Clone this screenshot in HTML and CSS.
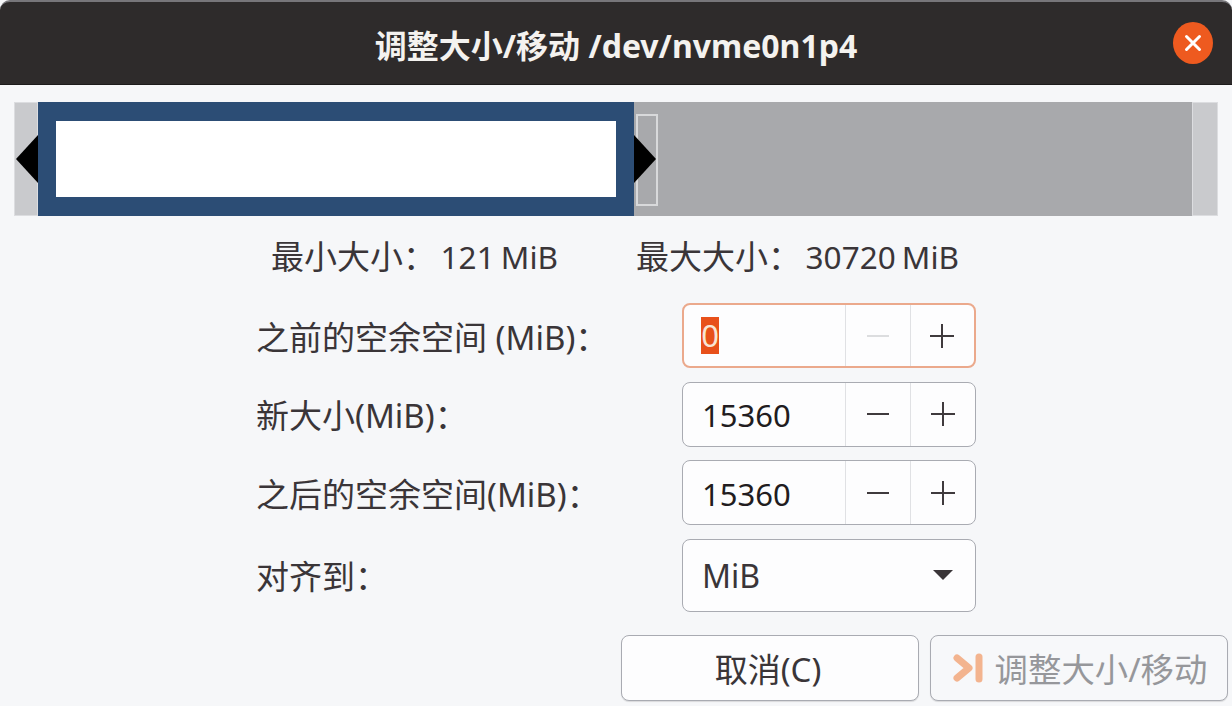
FILE: index.html
```html
<!doctype html>
<html lang="zh-CN">
  <head>
    <meta charset="UTF-8" />
    <title>调整大小/移动 /dev/nvme0n1p4</title>
    <link rel="stylesheet" href="styles.css">
  </head>
  <body>
    <div class="titlebar">
      <h1>调整大小/移动 /dev/nvme0n1p4</h1>
      <button class="close-btn" aria-label="关闭">
        <svg viewBox="0 0 40 42" width="40" height="42">
          <path d="M13.5 14.5 L26.5 27.5 M26.5 14.5 L13.5 27.5" stroke="#fff" stroke-width="3" stroke-linecap="round" fill="none" />
        </svg>
      </button>
    </div>

    <div class="content">
      <!-- Partition bar -->
      <div class="part-bar">
        <div class="bar-cap"></div>
        <div class="part-used">
          <div class="part-fill"></div>
          <div class="handle handle-left"></div>
          <div class="handle handle-right"></div>
        </div>
        <div class="part-free">
          <div class="free-marker"></div>
        </div>
        <div class="bar-cap bar-cap-end"></div>
      </div>

      <div class="size-info">
        <span class="size-min">最小大小：&nbsp;<span class="size-num">121 MiB</span></span>
        <span class="size-max">最大大小：&nbsp;<span class="size-num">30720 MiB</span></span>
      </div>

      <div class="form">
        <label>之前的空余空间 (MiB)：</label>
        <div class="spin spin-focus">
          <div class="spin-value"><span class="selected">0</span></div>
          <div class="spin-btn spin-disabled"><svg viewBox="0 0 24 24" width="24" height="24"><path d="M1 12 H23" /></svg></div>
          <div class="spin-btn"><svg viewBox="0 0 24 24" width="24" height="24"><path d="M0 12 H24 M12 0 V24" /></svg></div>
        </div>

        <label>新大小(MiB)：</label>
        <div class="spin">
          <div class="spin-value">15360</div>
          <div class="spin-btn"><svg viewBox="0 0 24 24" width="24" height="24"><path d="M1 12 H23" /></svg></div>
          <div class="spin-btn"><svg viewBox="0 0 24 24" width="24" height="24"><path d="M0 12 H24 M12 0 V24" /></svg></div>
        </div>

        <label>之后的空余空间(MiB)：</label>
        <div class="spin">
          <div class="spin-value">15360</div>
          <div class="spin-btn"><svg viewBox="0 0 24 24" width="24" height="24"><path d="M1 12 H23" /></svg></div>
          <div class="spin-btn"><svg viewBox="0 0 24 24" width="24" height="24"><path d="M0 12 H24 M12 0 V24" /></svg></div>
        </div>

        <label>对齐到：</label>
        <div class="combo">
          <span>MiB</span>
          <div class="combo-arrow"></div>
        </div>
      </div>

      <div class="actions">
        <button class="btn btn-cancel">取消(C)</button>
        <button class="btn btn-disabled">
          <svg viewBox="0 0 30 30" width="30" height="30">
            <path d="M4 5 L16 15 L4 25" stroke="#f3b48f" stroke-width="7" stroke-linecap="round" stroke-linejoin="round" fill="none" />
            <path d="M26 4 V26" stroke="#f3b48f" stroke-width="7" stroke-linecap="round" fill="none" />
          </svg>
          <span>调整大小/移动</span>
        </button>
      </div>
    </div>
  </body>
</html>
```

FILE: styles.css
```css
* {
  box-sizing: border-box;
}

html,
body {
  margin: 0;
  height: 100%;
}

body {
  width: 1232px;
  height: 706px;
  overflow: hidden;
  background-color: #f6f7f9;
  color: #3a3538;
  font-family: 'Noto Sans', 'Noto Sans CJK SC', sans-serif;
  font-size: 33px;
}

.titlebar {
  position: relative;
  display: flex;
  align-items: center;
  justify-content: center;
  height: 85px;
  padding-top: 3px;
  background-color: #2e2b2b;
  border-top: 2px solid #77767a;
  border-bottom: 1px solid #1d1b1b;
  border-radius: 10px 10px 0 0;
}

.titlebar h1 {
  margin: 0 0 2px;
  font-size: 32px;
  font-weight: 700;
  color: #f4f2ef;
}

.close-btn {
  position: absolute;
  top: 20px;
  left: 1173px;
  width: 40px;
  height: 42px;
  padding: 0;
  border: none;
  border-radius: 50%;
  background-color: #ee5a1f;
}

.close-btn svg {
  display: block;
}

.content {
  padding: 17px 4px 0 14px;
}

.part-bar {
  display: flex;
  width: 1204px;
  height: 114px;
}

.bar-cap {
  width: 24px;
  background-color: #c9cacd;
  border: 1px solid #dcdde0;
}

.bar-cap-end {
  width: 26px;
}

.part-used {
  position: relative;
  width: 596px;
  padding: 19px 18px;
  background-color: #2c4d75;
}

.part-fill {
  height: 76px;
  background-color: #fff;
}

.handle {
  position: absolute;
  top: 33px;
  width: 0;
  height: 0;
  border-top: 24px solid transparent;
  border-bottom: 24px solid transparent;
}

.handle-left {
  left: -22px;
  border-right: 22px solid #000;
}

.handle-right {
  right: -22px;
  border-left: 22px solid #000;
  z-index: 1;
}

.part-free {
  flex: 1;
  padding: 12px 0 0 2px;
  background-color: #a8a9ac;
}

.free-marker {
  width: 22px;
  height: 92px;
  border: 2px solid #d8d9db;
}

.size-info {
  display: flex;
  height: 57px;
  margin-top: 10px;
  align-items: center;
  padding-left: 257px;
}

.size-min {
  width: 365px;
}

.size-num {
  margin-left: -4px;
  font-size: 31.5px;
  word-spacing: -2px;
}

.form {
  display: grid;
  grid-template-columns: 426px 294px;
  grid-template-rows: 65px 65px 65px 73px;
  row-gap: 13.67px;
  margin-top: 20px;
  padding-left: 242px;
  align-items: center;
}

.spin,
.combo,
.btn {
  background-color: #fdfdfe;
  border: 1.5px solid #a9abb2;
  border-radius: 8px;
}

.spin {
  display: flex;
  height: 65px;
}

.spin-focus {
  border: 2.5px solid #eba98c;
}

.spin-value {
  display: flex;
  align-items: center;
  width: 162px;
  padding: 2px 0 0 19px;
  color: #211c20;
  font-size: 31px;
}

.spin-focus .spin-value {
  width: 161px;
  padding: 0 0 0 17px;
}

.spin-btn {
  display: flex;
  flex: 1;
  align-items: center;
  justify-content: center;
  border-left: 1px solid #e0e1e4;
}

.spin-btn svg path {
  stroke: #3f3a3d;
  stroke-width: 2;
  fill: none;
}

.spin-disabled svg path {
  stroke: #dcdddf;
}

.selected {
  display: block;
  width: 18px;
  height: 37px;
  line-height: 37px;
  text-align: center;
  background-color: #e8501a;
  color: #f8e4d4;
}

.combo {
  display: flex;
  align-items: center;
  justify-content: space-between;
  height: 73px;
  padding: 0 22px 0 19px;
  font-size: 32px;
}

.combo-arrow {
  width: 0;
  height: 0;
  border-left: 10px solid transparent;
  border-right: 10px solid transparent;
  border-top: 10px solid #3a3538;
}

.actions {
  display: flex;
  gap: 11px;
  margin-top: 23px;
  padding-left: 607px;
}

.btn {
  display: flex;
  align-items: center;
  justify-content: center;
  gap: 11px;
  width: 298px;
  height: 66px;
  padding: 0;
  font-family: inherit;
  font-size: 33px;
  color: #3a3538;
  box-shadow: 0 1px 1px rgba(0, 0, 0, 0.12);
}

.btn-cancel {
  padding-right: 4px;
}

.btn-disabled {
  gap: 12px;
  padding-left: 2px;
  font-size: 33.4px;
  color: #96979b;
  background-color: #f7f8fa;
}

.btn-disabled span {
  white-space: nowrap;
}

.btn-disabled svg {
  flex: none;
}
```
